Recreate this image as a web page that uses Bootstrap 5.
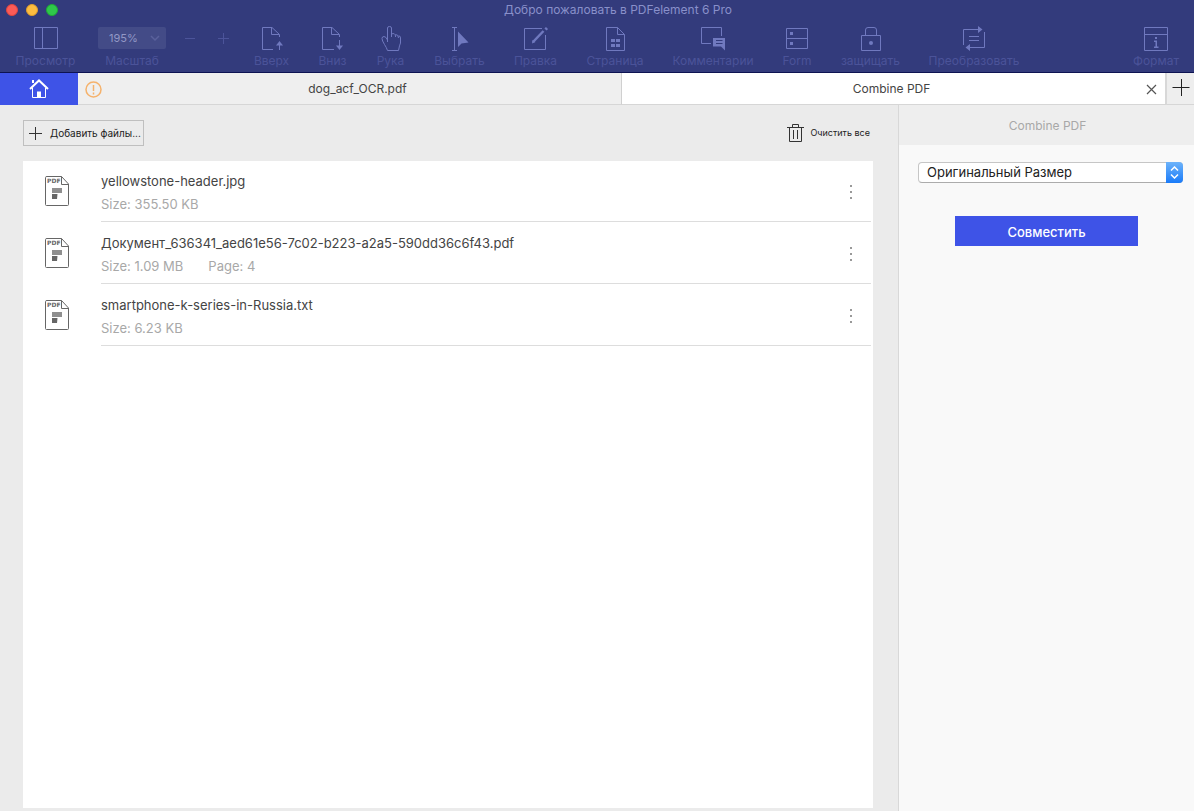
<!DOCTYPE html>
<html lang="ru">
<head>
<meta charset="utf-8">
<meta name="viewport" content="width=device-width, initial-scale=1">
<title>PDFelement 6 Pro</title>
<link href="https://cdn.jsdelivr.net/npm/bootstrap@5.3.0/dist/css/bootstrap.min.css" rel="stylesheet">
<style>
  body { font-family: Inter, "Noto Sans", sans-serif; font-size: 13px; line-height: 16px; background: #ebebeb; color: #444; }
  svg { display: block; fill: none; flex: none; }
  button { font: inherit; }

  .app-head { background: #333b7c; border-bottom: 1px solid #0d1352; height: 73px; color: #7079bf; }
  .title-bar { height: 20px; padding: 0 16px 0 6px; font-size: 12px; color: #8990ca; }
  .light { width: 12px; height: 12px; border-radius: 50%; }
  .light-close { background: #fc5b57; border: 1px solid #e1453f; }
  .light-min { background: #fdbc40; border: 1px solid #e09e2c; }
  .light-max { background: #2fc84a; border: 1px solid #1eab35; }

  .tool-bar { padding: 5px 15px 0 16px; font-size: 12px; }
  .tool-bar svg { stroke: #7079bf; }
  .tool { border: 0; background: none; padding: 0; color: #4b5399; display: flex; flex-direction: column; align-items: center; gap: 2px; white-space: nowrap; }
  .tool-set { display: grid; grid-template-columns: 35px 29px 29px 51px 43px 58px 80px 30px 59px 90px; column-gap: 29px; justify-items: center; margin-left: 24px; }
  .tool-view { width: 59px; }
  .tool-format { width: 46px; }
  .zoom-box { margin-left: 23px; color: #4b5399; }
  .zoom-pick { position: relative; width: 68px; height: 22px; margin: 2px 0 4px; }
  .zoom-pick select { appearance: none; width: 100%; height: 100%; border: 0; border-radius: 2px; background: #434b87; color: #9298c6; font-size: 11px; padding: 0 11px; }
  .zoom-pick svg { position: absolute; right: 6px; top: 8px; pointer-events: none; }
  .zoom-step { border: 0; background: none; padding: 0; height: 12px; margin-top: 7px; }
  .zoom-step svg { stroke: #4c549a; }

  .tab-strip { height: 32px; background: #efefef; color: #444; font-size: 12px; }
  .home-tab { flex: 0 0 78px; background: #3e53e7; }
  .doc-tab { border-bottom: 1px solid #d6d6d6; border-right: 1px solid #d0d0d0; flex: 1 1 0; min-width: 0; padding: 1px 8px 0 7px; }
  .doc-tab.current { background: #fff; border-right: 2px solid #d8d8d8; }
  .doc-tab a { color: inherit; text-decoration: none; }
  .new-tab { width: 27px; border: 0; border-bottom: 1px solid #d6d6d6; background: #eee; padding: 0 0 3px; }
  .bare { border: 0; background: none; padding: 0; }

  .work { padding: 15px 25px 3px 23px; min-width: 0; }
  .work-bar { height: 26px; margin-bottom: 15px; padding-right: 3px; color: #222; }
  .add-files { border: 1px solid #bfbfbf; background: none; height: 26px; padding: 0 2px 0 5px; font-size: 10px; color: #222; }
  .clear-all { font-size: 9px; color: #222; gap: 6px; }
  .file-list { background: #fff; padding: 0 2px 0 22px; }
  .file-row { height: 62px; padding-bottom: 1px; }
  .file-body { border-bottom: 1px solid #ddd; margin-left: 32px; padding: 12px 16px 0 0; }
  .file-info { color: #a8a8a8; gap: 25px; margin-top: 7px; }
  .file-icon { width: 24px; height: 30px; margin-top: 15px; }
  .file-icon text { font: 700 6px "DejaVu Sans", sans-serif; fill: #666; }

  .side { width: 296px; border-left: 1px solid #d8d8d8; background: #f9f9f9; }
  .side-title { height: 40px; padding: 2px 0 0 2px; background: #eee; color: #a8a8a8; font-size: 12px; }
  .size-pick { position: relative; height: 21px; margin: 17px 11px 0 19px; }
  .size-pick select { appearance: none; width: 100%; height: 100%; border: 1px solid #c6c6c6; border-bottom-color: #acacac; border-radius: 4px; background: #fff; color: #222; padding: 0 24px 0 8px; line-height: 19px; }
  .size-pick .stepper { position: absolute; right: 0; top: 0; width: 17px; height: 21px; border-radius: 0 4px 4px 0; background: linear-gradient(#6db3fa, #1a7bf9); pointer-events: none; }
  .combine { width: 183px; height: 30px; margin: 33px auto 0; background: #3e53e7; color: #fff; font-size: 13px; line-height: 16px; font-weight: 500; border: 0; border-radius: 0; padding: 2px 0 0; }
</style>
</head>
<body class="d-flex flex-column vh-100 overflow-hidden">

<header class="app-head flex-shrink-0">
  <div class="title-bar d-flex align-items-center">
    <div class="d-flex gap-2">
      <span class="light light-close"></span><span class="light light-min"></span><span class="light light-max"></span>
    </div>
    <div class="flex-grow-1 text-center text-truncate">Добро пожаловать в PDFelement 6 Pro</div>
  </div>

  <div class="tool-bar d-flex align-items-start">
    <button class="tool tool-view" type="button">
      <svg width="26" height="26"><path d="M1.500 2.500H24.500V23.500H1.500ZM9.500 2.500V23.500"/></svg>
      Просмотр
    </button>
    <div class="zoom-box d-flex flex-column align-items-center">
      <div class="zoom-pick">
        <select id="zoom"><option>195%</option></select>
        <svg width="10" height="7"><path d="M1 1L5 5L9 1" style="stroke:#5a619c;stroke-width:1.500"/></svg>
      </div>
      <label for="zoom">Масштаб</label>
    </div>
    <button class="zoom-step ms-3" type="button" aria-label="Уменьшить"><svg width="16" height="12"><path d="M3 6.500H13"/></svg></button>
    <button class="zoom-step ms-3" type="button" aria-label="Увеличить"><svg width="16" height="12"><path d="M4 6.500H15M9.500 1V12"/></svg></button>

    <div class="tool-set">
      <button class="tool" type="button">
        <svg width="26" height="26"><path d="M14 24.500H3.500V2.500H13L20.500 9.500V12M12.500 2.500V9.500H20M20.500 25V18"/><path d="M20.500 16L24 20.500H17Z" fill="#7079bf" stroke="none"/></svg>
        Вверх
      </button>
      <button class="tool" type="button">
        <svg width="26" height="26"><path d="M15 24.500H3.500V2.500H13L20.500 9.500V12M12.500 2.500V9.500H20M20.500 15V21"/><path d="M20.500 25L24 20.500H17Z" fill="#7079bf" stroke="none"/></svg>
        Вниз
      </button>
      <button class="tool" type="button">
        <svg width="26" height="26"><path d="M9.500 17V3Q9.500 1.500 11.500 1.500T13.500 3V12M13.500 9Q17 7.500 17.500 11V12M17.500 9.500Q20.500 9.500 20.500 13M20.500 11Q22.500 10.500 22.500 13V18Q21.500 20 20.500 25.500H9.500Q8.500 22.500 6.500 19.500Q4 15.500 4 13.500Q4 11.500 6 11.500Q8 11.500 9.500 15"/></svg>
        Рука
      </button>
      <button class="tool" type="button">
        <svg width="26" height="26"><path d="M6 2.500H11M6 25.500H11M8.500 2.500V25.500"/><path d="M12 6.500L22.500 17.500L15.500 18.500L12 22Z" fill="#7079bf" stroke="none"/></svg>
        Выбрать
      </button>
      <button class="tool" type="button">
        <svg width="26" height="26"><path d="M19 3.500H1.500V24.500H22.500V10"/><path d="M10 17L20.500 6" stroke-width="2.500"/><path d="M22.500 4.500L24 3" stroke-width="3"/><path d="M9 18.500L9.500 15L12.500 17Z" fill="#7079bf" stroke="none"/></svg>
        Правка
      </button>
      <button class="tool" type="button">
        <svg width="26" height="26"><path d="M4.500 2.500H15.500L22.500 9.500V25.500H4.500ZM15.500 2.500V9.500H22.500"/><path d="M9 14H13V17H9ZM14 14H18V17H14ZM9 19H13V22H9ZM14 19H18V22H14Z" fill="#7079bf" stroke="none"/></svg>
        Страница
      </button>
      <button class="tool" type="button">
        <svg width="26" height="26"><path d="M11 18.500H1.500V2.500H21.500V11"/><path fill-rule="evenodd" d="M13 13H25V25.500L21 21.500H13ZM16 15V16H22.500V15ZM16 18V19H22.500V18Z" fill="#7079bf" stroke="none"/></svg>
        Комментарии
      </button>
      <button class="tool" type="button">
        <svg width="26" height="26"><path d="M2.500 3.500H23.500V23.500H2.500ZM2.500 13.500H23.500"/><path d="M6 7H9V10H6ZM6 17H9V20H6Z" fill="#7079bf" stroke="none"/></svg>
        Form
      </button>
      <button class="tool" type="button">
        <svg width="26" height="26"><path d="M3.500 10.500H22.500V25.500H3.500ZM7.500 10.500V5Q7.500 2.500 10 2.500H16Q18.500 2.500 18.500 5V10.500"/><circle cx="13" cy="18" r="2" fill="#7079bf" stroke="none"/></svg>
        защищать
      </button>
      <button class="tool" type="button">
        <svg width="26" height="26"><path d="M2.500 20V4.500H18M23.500 7V22.500H8M8 11.500H18M8 15.500H18"/><path d="M17 1L21.500 4.500L17 8ZM9 19L4.500 22.500L9 26Z" fill="#7079bf" stroke="none"/></svg>
        Преобразовать
      </button>
    </div>

    <button class="tool tool-format ms-auto" type="button">
      <svg width="26" height="26"><path d="M1.500 2.500H24.500V25.500H1.500ZM1.500 9.500H24.500"/><path d="M12 12H14V14H12ZM11 15.500H14V21.500H15.500V23H11V21.500H12.500V17H11Z" fill="#7079bf" stroke="none"/></svg>
      Формат
    </button>
  </div>
</header>

<nav class="tab-strip d-flex flex-shrink-0">
  <a class="home-tab d-flex align-items-center justify-content-center" href="#" aria-label="Главная">
    <svg width="20" height="20" stroke="#fff"><path d="M1 10L10 1.500L19 10" stroke-width="2"/><path d="M3.500 9V18.500H16.500V9"/><path d="M3 1H5V4H3Z M8 12.500H12V19H8Z" fill="#fff" stroke="none"/></svg>
  </a>
  <div class="doc-tab d-flex align-items-center">
    <svg width="17" height="17" stroke="#f5b26c"><circle cx="8.500" cy="8.500" r="7.500" stroke-width="1.500"/><path d="M8.500 4V10M8.500 11.500V13.500" stroke-width="1.500"/></svg>
    <a href="#" class="flex-grow-1 text-center text-truncate">dog_acf_OCR.pdf</a>
  </div>
  <div class="doc-tab current d-flex align-items-center">
    <a href="#" class="flex-grow-1 text-center text-truncate ps-2" aria-current="page">Combine PDF</a>
    <button class="bare" type="button" aria-label="Закрыть"><svg width="11" height="11" stroke="#555"><path d="M1 1L10 10M10 1L1 10" stroke-width="1.200"/></svg></button>
  </div>
  <button class="new-tab flex-shrink-0" type="button" aria-label="Новая вкладка"><svg class="ms-auto me-1" width="18" height="18" stroke="#222"><path d="M.5 9.500H17.500M9.500 1V18"/></svg></button>
</nav>

<div class="d-flex flex-grow-1 overflow-hidden">
  <main class="work d-flex flex-column flex-grow-1">
    <div class="work-bar d-flex align-items-center justify-content-between flex-shrink-0">
      <button class="add-files d-flex align-items-center gap-2" type="button">
        <svg width="13" height="13" stroke="#333"><path d="M0 6.500H13M6.500 0V13"/></svg>
        Добавить файлы...
      </button>
      <button class="bare clear-all d-flex align-items-center" type="button">
        <svg width="17" height="18" stroke="#333"><path d="M0 3.500H17M2.500 3.500V17.500H14.500V3.500M5.500 3.500V.5H11.500V3.500M6.500 6V15M10.500 6V15"/></svg>
        Очистить все
      </button>
    </div>
    <ul class="file-list list-unstyled flex-grow-1 mb-0">
      <li class="file-row d-flex">
        <svg class="file-icon" viewBox="0 0 24 30"><path d="M2 .5H16.500L23.500 8V28.500Q23.500 29.500 22.500 29.500H1.500Q.5 29.500 .5 28.500V1.500Q.5 .5 2 .5ZM16.500 .5V8.500H23.500" stroke="#666"/><path d="M7 12H17V17H7Z" fill="#8f8f8f"/><path d="M7 18H12.500L12 23H7Z" fill="#666"/><text x="2" y="7">PDF</text></svg>
        <div class="file-body d-flex justify-content-between flex-grow-1">
          <div><div>yellowstone-header.jpg</div><div class="file-info d-flex"><span>Size: 355.50 KB</span></div></div>
          <button class="bare align-self-start mt-2 pt-1" type="button" aria-label="Меню"><svg width="8" height="14"><path d="M3 0H5V2H3ZM3 6H5V8H3ZM3 12H5V14H3Z" fill="#999"/></svg></button>
        </div>
      </li>
      <li class="file-row d-flex">
        <svg class="file-icon" viewBox="0 0 24 30"><path d="M2 .5H16.500L23.500 8V28.500Q23.500 29.500 22.500 29.500H1.500Q.5 29.500 .5 28.500V1.500Q.5 .5 2 .5ZM16.500 .5V8.500H23.500" stroke="#666"/><path d="M7 12H17V17H7Z" fill="#8f8f8f"/><path d="M7 18H12.500L12 23H7Z" fill="#666"/><text x="2" y="7">PDF</text></svg>
        <div class="file-body d-flex justify-content-between flex-grow-1">
          <div><div>Документ_636341_aed61e56-7c02-b223-a2a5-590dd36c6f43.pdf</div><div class="file-info d-flex"><span>Size: 1.09 MB</span><span>Page: 4</span></div></div>
          <button class="bare align-self-start mt-2 pt-1" type="button" aria-label="Меню"><svg width="8" height="14"><path d="M3 0H5V2H3ZM3 6H5V8H3ZM3 12H5V14H3Z" fill="#999"/></svg></button>
        </div>
      </li>
      <li class="file-row d-flex">
        <svg class="file-icon" viewBox="0 0 24 30"><path d="M2 .5H16.500L23.500 8V28.500Q23.500 29.500 22.500 29.500H1.500Q.5 29.500 .5 28.500V1.500Q.5 .5 2 .5ZM16.500 .5V8.500H23.500" stroke="#666"/><path d="M7 12H17V17H7Z" fill="#8f8f8f"/><path d="M7 18H12.500L12 23H7Z" fill="#666"/><text x="2" y="7">PDF</text></svg>
        <div class="file-body d-flex justify-content-between flex-grow-1">
          <div><div>smartphone-k-series-in-Russia.txt</div><div class="file-info d-flex"><span>Size: 6.23 KB</span></div></div>
          <button class="bare align-self-start mt-2 pt-1" type="button" aria-label="Меню"><svg width="8" height="14"><path d="M3 0H5V2H3ZM3 6H5V8H3ZM3 12H5V14H3Z" fill="#999"/></svg></button>
        </div>
      </li>
    </ul>
  </main>

  <aside class="side flex-shrink-0">
    <div class="side-title d-flex align-items-center justify-content-center">Combine PDF</div>
    <form>
      <div class="size-pick">
        <select aria-label="Размер страницы"><option>Оригинальный Размер</option></select>
        <span class="stepper d-flex align-items-center justify-content-center"><svg width="9" height="13" stroke="#fff"><path d="M1 4.500L4.500 1L8 4.500M1 8.500L4.500 12L8 8.500" stroke-width="1.500"/></svg></span>
      </div>
      <button class="combine btn d-block" type="button">Совместить</button>
    </form>
  </aside>
</div>

<script src="https://cdn.jsdelivr.net/npm/bootstrap@5.3.0/dist/js/bootstrap.bundle.min.js"></script>
</body>
</html>
